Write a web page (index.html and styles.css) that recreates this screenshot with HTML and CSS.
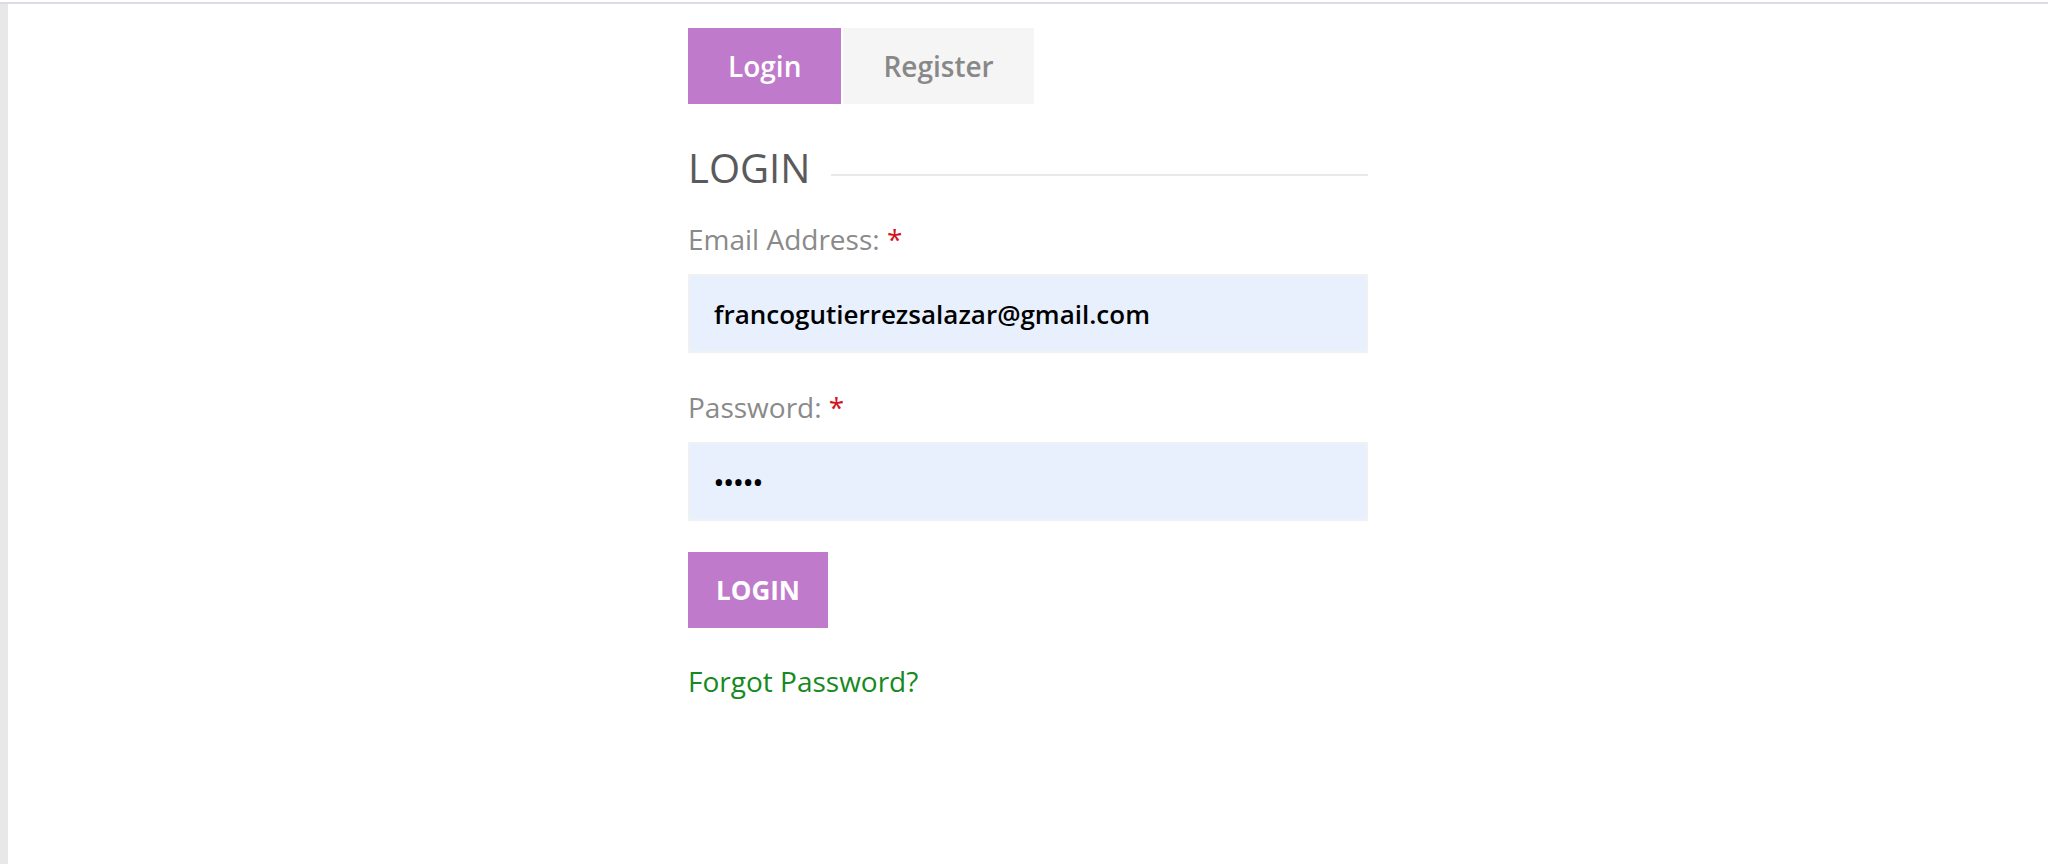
FILE: index.html
```html
<!DOCTYPE html>
<html lang="en">
<head>
<meta charset="utf-8">
<title>Login</title>
<link rel="stylesheet" href="styles.css">
</head>
<body>
<div class="topline"></div>
<div class="page">
  <div class="sidebar"></div>
  <main class="content">
    <div class="account">
      <nav class="tabs">
        <a class="tab tab-active" href="#">Login</a>
        <a class="tab" href="#">Register</a>
      </nav>
      <h2 class="section-title">LOGIN</h2>
      <form class="login-form">
        <label class="field-label" for="email">Email Address: <span class="req">*</span></label>
        <input class="field-input" id="email" type="text" value="francogutierrezsalazar@gmail.com">
        <label class="field-label field-label-spaced" for="pass">Password: <span class="req">*</span></label>
        <input class="field-input" id="pass" type="password" value="12345">
        <button class="btn-login" type="button">LOGIN</button>
      </form>
      <p class="forgot"><a href="#">Forgot Password?</a></p>
    </div>
  </main>
</div>
</body>
</html>
```

FILE: styles.css
```css
html, body {
  margin: 0;
  padding: 0;
  background: #ffffff;
}

body {
  font-family: "Open Sans", "Noto Sans", sans-serif;
  padding-top: 2px;
}

.topline {
  height: 2px;
  background: #dcdce2;
}

.page {
  display: flex;
  min-height: calc(100vh - 4px);
}

.sidebar {
  width: 8px;
  flex: 0 0 8px;
  background: #e8e8e8;
}

.content {
  flex: 1;
  padding-top: 24px;
}

.account {
  width: 680px;
  margin: 0 auto;
}

.tabs {
  display: flex;
  gap: 2px;
}

.tab {
  display: block;
  height: 76px;
  line-height: 76px;
  padding: 0 40px;
  font-size: 28px;
  font-weight: 600;
  color: #888888;
  background: #f5f5f5;
  text-decoration: none;
}

.tab-active {
  background: #bf7acb;
  color: #ffffff;
}

.section-title {
  display: flex;
  align-items: center;
  margin: 40px 0 0;
  font-size: 40px;
  font-weight: 400;
  line-height: 48px;
  color: #5a5a5a;
}

.section-title::after {
  content: "";
  flex: 1;
  height: 2px;
  margin: 13px 0 0 21px;
  background: #e9e9e9;
}

.login-form {
  display: flex;
  flex-direction: column;
  align-items: flex-start;
  margin: 0;
}

.field-label {
  display: block;
  margin-top: 26px;
  font-size: 28px;
  line-height: 42px;
  color: #8a8a8a;
}

.field-label-spaced {
  margin-top: 33px;
}

.req {
  color: #d4121e;
}

.field-input {
  box-sizing: border-box;
  width: 100%;
  height: 79px;
  margin-top: 14px;
  padding: 0 24px;
  border: 2px solid #f0f1f3;
  background: #e8f0fe;
  font-family: "Open Sans", "Noto Sans", sans-serif;
  font-size: 26px;
  font-weight: 600;
  color: #000000;
  outline: none;
}

.btn-login {
  height: 76px;
  margin-top: 31px;
  padding: 0 28px;
  border: none;
  background: #bf7acb;
  color: #ffffff;
  font-family: "Open Sans", "Noto Sans", sans-serif;
  font-size: 26px;
  font-weight: 700;
  line-height: 76px;
  cursor: pointer;
}

.forgot {
  margin: 32px 0 0;
  font-size: 28px;
  line-height: 42px;
}

.forgot a {
  color: #168a1e;
  text-decoration: none;
}
```
